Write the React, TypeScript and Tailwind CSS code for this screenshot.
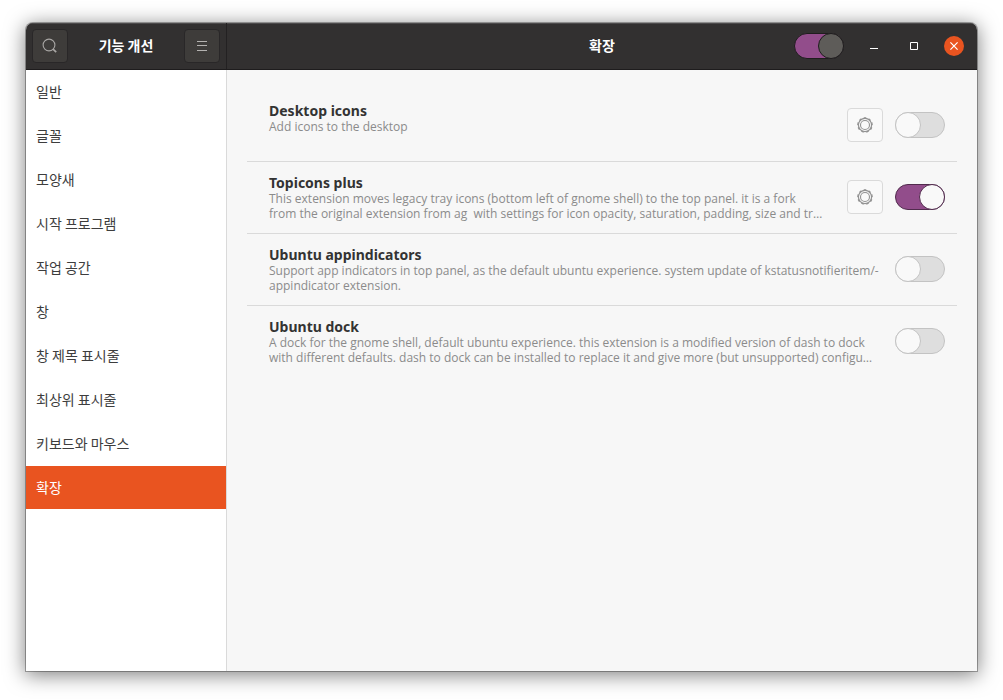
import React from "react";

const sections = [
  "일반",
  "글꼴",
  "모양새",
  "시작 프로그램",
  "작업 공간",
  "창",
  "창 제목 표시줄",
  "최상위 표시줄",
  "키보드와 마우스",
  "확장",
];

type Extension = {
  id: string;
  name: string;
  lines: string[];
  enabled: boolean;
  configurable: boolean;
};

const extensions: Extension[] = [
  {
    id: "desktop-icons",
    name: "Desktop icons",
    lines: ["Add icons to the desktop"],
    enabled: false,
    configurable: true,
  },
  {
    id: "topicons-plus",
    name: "Topicons plus",
    lines: [
      "This extension moves legacy tray icons (bottom left of gnome shell) to the top panel. it is a fork",
      "from the original extension from ag\u00a0 with settings for icon opacity, saturation, padding, size and tr…",
    ],
    enabled: true,
    configurable: true,
  },
  {
    id: "ubuntu-appindicators",
    name: "Ubuntu appindicators",
    lines: [
      "Support app indicators in top panel, as the default ubuntu experience. system update of kstatusnotifieritem/-",
      "appindicator extension.",
    ],
    enabled: false,
    configurable: false,
  },
  {
    id: "ubuntu-dock",
    name: "Ubuntu dock",
    lines: [
      "A dock for the gnome shell, default ubuntu experience. this extension is a modified version of dash to dock",
      "with different defaults. dash to dock can be installed to replace it and give more (but unsupported) configu…",
    ],
    enabled: false,
    configurable: false,
  },
];

function SearchIcon() {
  return (
    <svg viewBox="0 0 16 16" className="size-4" fill="none" stroke="#a8a6a4" aria-hidden="true">
      <circle cx="7" cy="7" r="5.9" strokeWidth="1.1" />
      <path d="M11 11.2 14.2 14.2" strokeWidth="1.7" />
    </svg>
  );
}

function MenuIcon() {
  return (
    <svg viewBox="0 0 16 16" className="size-4" fill="none" stroke="#b4b2b0" aria-hidden="true">
      <path d="M3 3.5h10M3 7.5h10M3 12.5h10" />
    </svg>
  );
}

const teeth = [0, 40, 80, 120, 160, 200, 240, 280, 320];

function GearIcon() {
  return (
    <svg viewBox="0 0 16 16" className="size-4" fill="none" stroke="#929292" aria-hidden="true">
      <circle cx="8" cy="8" r="6.6" strokeWidth="1.2" />
      <circle cx="8" cy="8" r="4.5" strokeWidth="1.1" />
      {teeth.map((angle) => (
        <path key={angle} d="M6.7.9h2.6" strokeWidth="1.3" transform={`rotate(${angle} 8 8)`} />
      ))}
    </svg>
  );
}

const switchBase =
  "block h-[26px] w-[50px] shrink-0 cursor-pointer appearance-none rounded-full border before:-mt-px before:block before:size-[26px] before:rounded-full before:border before:content-['']";

function HeaderSwitch() {
  return (
    <input
      type="checkbox"
      role="switch"
      aria-label="확장"
      defaultChecked
      className={`${switchBase} border-[#1f1d1e] bg-[#5e5c59] before:-ml-px before:border-[#1f1d1e] before:bg-[#5e5c59] checked:bg-[#924d8b] checked:before:ml-[23px]`}
    />
  );
}

function ExtensionSwitch({ id, label, checked }: { id: string; label: string; checked: boolean }) {
  return (
    <input
      id={id}
      type="checkbox"
      role="switch"
      aria-label={label}
      defaultChecked={checked}
      className={`${switchBase} border-[#c3c3c3] bg-[#dedede] before:-ml-px before:border-[#c3c3c3] before:bg-[#f9f9f9] checked:border-[#512b4d] checked:bg-[#924d8b] checked:before:ml-[23px] checked:before:border-[#512b4d]`}
    />
  );
}

function ExtensionRow({ extension }: { extension: Extension }) {
  return (
    <li className="flex h-18 items-center gap-3 border-b border-[#dadada] pr-3 pb-px pl-[22px] last:border-transparent">
      <div className="min-w-0 flex-1 self-start pt-3">
        <label
          htmlFor={extension.id}
          className="block text-sm leading-[17px] font-bold text-[#333333]"
        >
          {extension.name}
        </label>
        <p className="font-['Open_Sans',sans-serif] text-xs leading-[15px] whitespace-nowrap text-[#8b8b8b]">
          {extension.lines.map((line) => (
            <span key={line} className="block">
              {line}
            </span>
          ))}
        </p>
      </div>
      {extension.configurable && (
        <button
          type="button"
          aria-label={`${extension.name} settings`}
          className="flex h-[34px] w-9 shrink-0 items-center justify-center rounded border border-[#dadada] bg-[#f9f9f9]"
        >
          <GearIcon />
        </button>
      )}
      <ExtensionSwitch id={extension.id} label={extension.name} checked={extension.enabled} />
    </li>
  );
}

const headerButton =
  "flex h-[34px] w-9 shrink-0 items-center justify-center rounded border border-[#292728] bg-[#3e3c3a]";

export default function App() {
  return (
    <div className="flex min-h-screen bg-white px-[26px] pt-[23px] pb-[29px] font-['Noto_Sans','Noto_Sans_CJK_KR',sans-serif] text-sm text-[#3d3d3d]">
      <div className="flex flex-1 flex-col overflow-hidden rounded-t-[7px] bg-[#f7f7f7] shadow-[0_0_0_1px_rgba(0,0,0,0.3),0_3px_20px_1px_rgba(0,0,0,0.5)]">
        <header className="flex h-[47px] border-b border-[#1e1c1d] bg-[#323030] font-['Noto_Sans_CJK_KR',sans-serif] text-white inset-shadow-[0_1px_0_#4c4a4b]">
          <div className="flex w-[201px] shrink-0 items-center justify-between border-r border-[#232122] px-[6px]">
            <button type="button" aria-label="검색" className={headerButton}>
              <SearchIcon />
            </button>
            <h1 className="pb-0.5 font-bold">기능 개선</h1>
            <button type="button" aria-label="메뉴" className={headerButton}>
              <MenuIcon />
            </button>
          </div>
          <div className="grid flex-1 grid-cols-[1fr_auto_1fr] items-center pr-[3px] pl-[3px]">
            <span />
            <h2 className="pb-0.5 font-bold">확장</h2>
            <div className="flex items-center justify-end">
              <div className="mr-[10px]">
                <HeaderSwitch />
              </div>
              <button type="button" aria-label="최소화" className="flex h-10 w-10 items-center justify-center">
                <svg viewBox="0 0 8 8" className="size-2" aria-hidden="true">
                  <path d="M0 6.5h8" stroke="#fff" />
                </svg>
              </button>
              <button type="button" aria-label="최대화" className="flex h-10 w-10 items-center justify-center">
                <svg viewBox="0 0 8 8" className="size-2" aria-hidden="true">
                  <path d="M.5.5h7v7h-7z" fill="none" stroke="#fff" />
                </svg>
              </button>
              <button type="button" aria-label="닫기" className="flex h-10 w-10 items-center justify-center">
                <span className="flex size-5 items-center justify-center rounded-full bg-[#e95420]">
                  <svg viewBox="0 0 8 8" className="size-2" aria-hidden="true">
                    <path d="M.4.4 7.6 7.6M7.6.4.4 7.6" stroke="#fff" strokeWidth="1.2" />
                  </svg>
                </span>
              </button>
            </div>
          </div>
        </header>

        <div className="flex flex-1">
          <nav className="w-[201px] shrink-0 border-r border-[#dadada] bg-white font-['Noto_Sans_CJK_KR',sans-serif]">
            <ul className="flex flex-col gap-px">
              {sections.map((section) => {
                const active = section === "확장";
                return (
                  <li key={section}>
                    <a
                      href="#"
                      aria-current={active ? "page" : undefined}
                      className={`flex h-[43px] items-center px-[10px] pb-0.5 ${active ? "bg-[#e95420] text-white" : ""}`}
                    >
                      {section}
                    </a>
                  </li>
                );
              })}
            </ul>
          </nav>
          <main className="min-w-0 flex-1 p-5">
            <ul>
              {extensions.map((extension) => (
                <ExtensionRow key={extension.id} extension={extension} />
              ))}
            </ul>
          </main>
        </div>
      </div>
    </div>
  );
}
